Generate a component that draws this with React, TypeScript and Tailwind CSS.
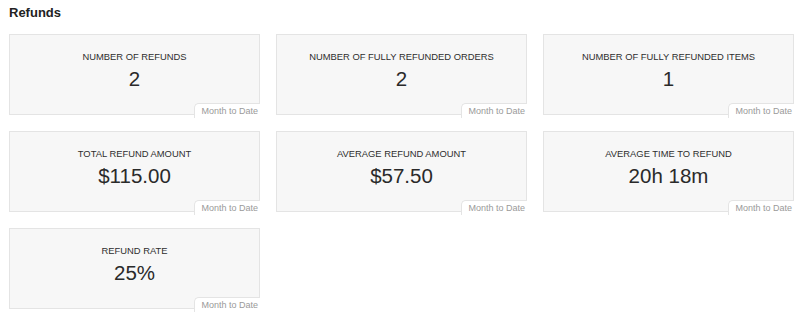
import React from "react";

const cards = [
  { label: "NUMBER OF REFUNDS", value: "2" },
  { label: "NUMBER OF FULLY REFUNDED ORDERS", value: "2" },
  { label: "NUMBER OF FULLY REFUNDED ITEMS", value: "1" },
  { label: "TOTAL REFUND AMOUNT", value: "$115.00" },
  { label: "AVERAGE REFUND AMOUNT", value: "$57.50" },
  { label: "AVERAGE TIME TO REFUND", value: "20h 18m" },
  { label: "REFUND RATE", value: "25%" },
];

export default function App() {
  return (
    <div
      className="w-[800px] h-[316px] bg-white pl-[9px] pt-[5px] overflow-hidden"
      style={{ fontFamily: '"Liberation Sans", Arial, sans-serif' }}
    >
      <h1 className="text-[13px] leading-[16px] font-bold text-[#222]">Refunds</h1>
      <div className="mt-[13px] grid grid-cols-[251px_251px_251px] gap-x-[16px] gap-y-[16px]">
        {cards.map((c) => (
          <div
            key={c.label}
            className="relative h-[81px] border border-[#e4e4e4] bg-[#f7f7f7] flex flex-col items-center"
          >
            <div className="mt-[16px] text-[9.4px] leading-[12px] text-[#2e2e2e]">
              {c.label}
            </div>
            <div className="mt-[4px] text-[20.5px] leading-[24px] text-[#2a2a2a]">{c.value}</div>
            <div className="absolute right-[-1px] bottom-[-4px] h-[15px] pl-[6px] pr-[2px] bg-white border-t border-l border-[#e4e4e4] rounded-tl-[5px] text-[9px] leading-[15px] text-[#9a9a9a]">
              Month to Date
            </div>
          </div>
        ))}
      </div>
    </div>
  );
}
